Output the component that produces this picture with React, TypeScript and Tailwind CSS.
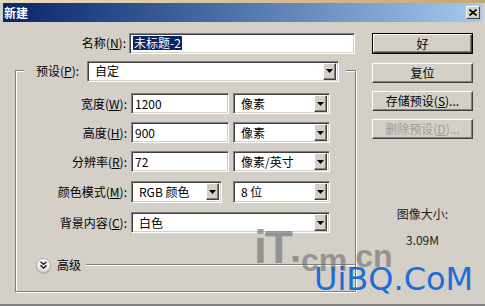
import React from 'react';

const font = { fontFamily: '"Noto Sans CJK SC", "Liberation Sans", sans-serif' };

function Sunken({ className = '', children }: { className?: string; children?: React.ReactNode }) {
  return (
    <div
      className={`flex items-center h-[21px] bg-white border border-t-[#808080] border-l-[#808080] border-r-white border-b-white shadow-[inset_1px_1px_0_#404040,inset_-1px_-1px_0_#d4d0c8] ${className}`}
    >
      {children}
    </div>
  );
}

function Arrow() {
  return (
    <div className="ml-auto mr-[2px] w-[13px] h-[17px] flex items-center justify-center bg-[#d4d0c8] border border-t-white border-l-white border-r-[#404040] border-b-[#404040] shadow-[inset_-1px_-1px_0_#808080]">
      <svg width="7" height="4" viewBox="0 0 7 4">
        <path d="M0 0h7L3.5 4z" fill="#000" />
      </svg>
    </div>
  );
}

function Select({ value, className = '' }: { value: string; className?: string }) {
  return (
    <Sunken className={className}>
      <span className="pl-[7px] text-[12px] text-black leading-none">{value}</span>
      <Arrow />
    </Sunken>
  );
}

function Field({ label, keyChar, children }: { label: string; keyChar: string; children: React.ReactNode }) {
  return (
    <div className="flex items-center h-[21px]">
      <div className="w-[115px] text-right pr-[4px] text-[12px] text-black whitespace-nowrap">
        {label}(<span className="underline">{keyChar}</span>):
      </div>
      {children}
    </div>
  );
}

function Button({ children, isDefault = false, disabled = false }: { children: React.ReactNode; isDefault?: boolean; disabled?: boolean }) {
  return (
    <div className={isDefault ? 'border border-black' : ''}>
      <div
        className={`flex items-center justify-center ${isDefault ? 'h-[19px]' : 'h-[20px]'} bg-[#d4d0c8] border border-t-white border-l-white border-r-[#404040] border-b-[#404040] shadow-[inset_-1px_-1px_0_#808080] text-[12px] ${disabled ? 'text-[#a09c94]' : 'text-black'}`}
      >
        {children}
      </div>
    </div>
  );
}

export default function App() {
  return (
    <div className="relative w-[485px] h-[306px] overflow-hidden bg-[#d4d0c8]" style={font}>
      <div className="h-[3px] bg-gradient-to-r from-[#e8dcc0] to-[#c4a870]" />
      <div className="mx-[3px] h-[19px] flex items-center justify-between bg-gradient-to-r from-[#0a246a] to-[#a6caf0]">
        <span className="pl-[1px] text-[12px] font-bold text-white leading-none">新建</span>
        <div className="mr-[2px] w-[14px] h-[13px] flex items-center justify-center bg-[#d4d0c8] border border-t-white border-l-white border-r-[#404040] border-b-[#404040]">
          <svg width="8" height="7" viewBox="0 0 8 7">
            <path d="M0.5 0.5l7 6M7.5 0.5l-7 6" stroke="#000" strokeWidth="1.6" />
          </svg>
        </div>
      </div>

      <div className="flex">
        <div className="w-[358px]">
          <div className="mt-[11px] flex items-center h-[20px]">
            <div className="w-[129px] text-right pr-[3px] text-[12px] text-black">
              名称(<span className="underline">N</span>):
            </div>
            <Sunken className="w-[226px]">
              <span className="ml-[3px] px-[1px] bg-[#0a246a] text-white text-[12px] leading-[14px]">未标题-2</span>
            </Sunken>
          </div>

          <div className="ml-[15px] mt-[17px] w-[341px] h-[222px] border border-[#808080] shadow-[inset_1px_1px_0_#fff,1px_1px_0_#fff]">
            <div className="-mt-[10px] ml-[8px] mr-[9px] bg-[#d4d0c8] flex items-center pl-[12px] pr-[6px] h-[20px]">
              <span className="w-[51px] text-[12px] text-black">
                预设(<span className="underline">P</span>):
              </span>
              <Select value="自定" className="w-[252px] h-[20px]" />
            </div>

            <div className="mt-[12px] flex flex-col">
              <Field label="宽度" keyChar="W">
                <Sunken className="w-[98px]">
                  <span className="pl-[3px] text-[12px] text-black">1200</span>
                </Sunken>
                <Select value="像素" className="ml-[4px] w-[97px]" />
              </Field>
              <div className="h-[8px]" />
              <Field label="高度" keyChar="H">
                <Sunken className="w-[98px]">
                  <span className="pl-[3px] text-[12px] text-black">900</span>
                </Sunken>
                <Select value="像素" className="ml-[4px] w-[97px]" />
              </Field>
              <div className="h-[8px]" />
              <Field label="分辨率" keyChar="R">
                <Sunken className="w-[98px]">
                  <span className="pl-[3px] text-[12px] text-black">72</span>
                </Sunken>
                <Select value="像素/英寸" className="ml-[4px] w-[97px]" />
              </Field>
              <div className="h-[9px]" />
              <Field label="颜色模式" keyChar="M">
                <Select value="RGB 颜色" className="w-[91px] h-[22px]" />
                <Select value="8 位" className="ml-[11px] w-[97px] h-[22px]" />
              </Field>
              <div className="h-[10px]" />
              <Field label="背景内容" keyChar="C">
                <Select value="白色" className="w-[199px]" />
              </Field>
            </div>

            <div className="mt-[23px] flex items-center">
              <div className="ml-[20px] w-[15px] h-[15px] rounded-full bg-gradient-to-b from-white to-[#dcdcdc] border border-[#a8a8a8] shadow-[0_1px_1px_rgba(0,0,0,0.15)] flex items-center justify-center">
                <svg width="7" height="8" viewBox="0 0 7 8">
                  <path d="M0.5 0.8L3.5 3.4L6.5 0.8M0.5 4.4L3.5 7L6.5 4.4" stroke="#222" strokeWidth="1.4" fill="none" />
                </svg>
              </div>
              <span className="ml-[6px] text-[12px] text-black">高级</span>
              <div className="ml-[5px] flex-1 h-0 border-t border-[#808080] border-b border-b-white" />
            </div>
          </div>
        </div>

        <div className="ml-[14px] w-[101px] flex flex-col">
          <div className="mt-[11px]">
            <Button isDefault>好</Button>
          </div>
          <div className="mt-[9px]">
            <Button>复位</Button>
          </div>
          <div className="mt-[8px]">
            <Button>
              存储预设(<span className="underline">S</span>)...
            </Button>
          </div>
          <div className="mt-[8px]">
            <Button disabled>
              删除预设(<span className="underline">D</span>)...
            </Button>
          </div>
          <div className="mt-[66px] text-center text-[12px] text-[#202020]">图像大小:</div>
          <div className="mt-[8px] text-center text-[12px] text-[#202020]">3.09M</div>
        </div>
      </div>

      <div className="absolute left-0 right-0 bottom-0 h-[2px] bg-[#808080]" />

      {/* watermarks */}
      <div className="absolute left-[254px] top-[224px] flex items-end text-[#7a7a7a] opacity-70 font-bold leading-none" style={{ fontFamily: '"Liberation Sans", sans-serif' }}>
        <span className="text-[46px] tracking-[-2px]">iT</span>
        <span className="text-[40px] -ml-[1px] mb-[2px]">.</span>
        <span className="text-[32px] -mb-[6px]">cm</span>
        <span className="text-[32px] ml-[8px] -mb-[2px]">cn</span>
      </div>
      <div className="absolute left-[314px] top-[263px] text-[#1a6ed8] text-[32px] leading-none" style={{ fontFamily: '"DejaVu Sans", sans-serif' }}>
        UiBQ.CoM
      </div>
    </div>
  );
}
